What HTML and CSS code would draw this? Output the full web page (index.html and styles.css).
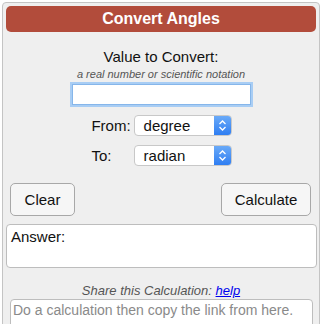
FILE: index.html
```html
<!DOCTYPE html>
<html lang="en">
<head>
    <meta charset="UTF-8">
    <title>Convert Angles</title>
    <link rel="stylesheet" href="styles.css">
</head>
<body>
    <div class="calc">
        <div class="calc-title">Convert Angles</div>

        <div class="value-label">Value to Convert:</div>
        <div class="hint">a real number or scientific notation</div>
        <div class="value-row">
            <input type="text" id="value" class="value-input">
        </div>

        <div class="units">
            <label>From:</label>
            <div class="select">
                <span class="select-text">degree</span>
                <span class="select-arrow">
                    <svg width="9" height="13" viewBox="0 0 9 13"><path d="M1.5 5 L4.5 2 L7.5 5 M1.5 8 L4.5 11 L7.5 8" fill="none" stroke="#fff" stroke-width="1.3"/></svg>
                </span>
            </div>
            <label>To:</label>
            <div class="select">
                <span class="select-text">radian</span>
                <span class="select-arrow">
                    <svg width="9" height="13" viewBox="0 0 9 13"><path d="M1.5 5 L4.5 2 L7.5 5 M1.5 8 L4.5 11 L7.5 8" fill="none" stroke="#fff" stroke-width="1.3"/></svg>
                </span>
            </div>
        </div>

        <div class="buttons">
            <button class="button clear">Clear</button>
            <button class="button calculate">Calculate</button>
        </div>

        <div class="answer">Answer:</div>

        <div class="share">Share this Calculation: <a href="#">help</a></div>
        <textarea class="share-link" placeholder="Do a calculation then copy the link from here."></textarea>
    </div>
</body>
</html>
```

FILE: styles.css
```css
body {
    margin: 0;
    background-color: #fff;
    font-family: 'Liberation Sans', Arial, sans-serif;
    color: #111;
    overflow: hidden;
}
.calc {
    margin: 2px 0 0 2px;
    width: 318px;
    height: 340px;
    box-sizing: border-box;
    border: 1px solid #c4c4c4;
    border-radius: 4px;
    background-color: #efefef;
    padding: 3px;
}
.calc-title {
    background-color: #b24c3b;
    color: #fff;
    font-weight: bold;
    font-size: 16px;
    line-height: 26px;
    text-align: center;
    border-radius: 5px;
}
.value-label {
    margin-top: 16px;
    text-align: center;
    font-size: 15px;
    line-height: 18px;
}
.hint {
    margin-top: 2px;
    text-align: center;
    font-size: 11px;
    font-style: italic;
    color: #555;
    line-height: 13px;
}
.value-row {
    display: flex;
    justify-content: center;
    padding-left: 1px;
}
.value-input {
    width: 179px;
    height: 21px;
    box-sizing: border-box;
    margin: 3px 0;
    border: 1px solid #86b6ea;
    box-shadow: 0 0 0 2px #a8cdf4;
    outline: none;
    background: #fff;
}
.units {
    display: grid;
    grid-template-columns: auto auto;
    justify-content: center;
    align-items: center;
    column-gap: 3px;
    row-gap: 9px;
    margin-top: 7px;
    margin-left: 1px;
    font-size: 15px;
}
.select {
    display: flex;
    width: 98px;
    height: 21px;
    box-sizing: border-box;
    background: #fff;
    border: 1px solid #c8c8c8;
    border-radius: 4px;
    overflow: hidden;
}
.select-text {
    flex: 1;
    padding-left: 9px;
    line-height: 19px;
}
.select-arrow {
    width: 17px;
    display: flex;
    align-items: center;
    justify-content: center;
    background: linear-gradient(#6aaaf8, #2f7ef2);
}
.buttons {
    display: flex;
    justify-content: space-between;
    margin: 17px 5px 0 4px;
}
.button {
    height: 33px;
    box-sizing: border-box;
    border: 1px solid #a8a8a8;
    border-radius: 5px;
    background-color: #f6f6f6;
    font-family: 'Liberation Sans', Arial, sans-serif;
    font-size: 15px;
    color: #111;
    padding: 0;
}
.clear {
    width: 65px;
}
.calculate {
    width: 90px;
}
.answer {
    margin-top: 8px;
    width: 311px;
    height: 44px;
    box-sizing: border-box;
    background: #fff;
    border: 1px solid #bdbdbd;
    border-radius: 4px;
    padding: 3px 4px;
    font-size: 15px;
    line-height: 18px;
}
.share {
    margin-top: 15px;
    text-align: center;
    font-size: 13px;
    font-style: italic;
    color: #555;
    line-height: 16px;
}
.share a {
    color: #0000ee;
}
.share-link {
    display: block;
    margin: 0 0 0 4px;
    width: 303px;
    height: 40px;
    box-sizing: border-box;
    border: 1px solid #bdbdbd;
    border-radius: 4px;
    padding: 2px 2px;
    font-family: 'Liberation Sans', Arial, sans-serif;
    font-size: 14px;
    resize: none;
}
.share-link::placeholder {
    color: #8a8a8a;
}
```
